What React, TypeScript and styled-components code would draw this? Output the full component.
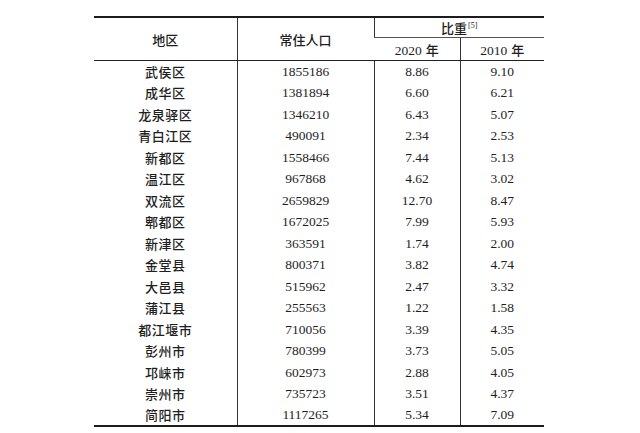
import React from "react";
import styled, { createGlobalStyle } from "styled-components";

const Global = createGlobalStyle`
  html, body { margin: 0; padding: 0; background: #ffffff; }
  body { width: 640px; height: 433px; overflow: hidden; }
`;

const Page = styled.div`
  padding: 16px 0 0 94px;
`;

const Table = styled.table`
  width: 450px;
  table-layout: fixed;
  border-collapse: collapse;
  border-top: 2px solid #1c1c1c;
  border-bottom: 2px solid #1c1c1c;
  color: #1e1e1e;
`;

const HeadCell = styled.th<{ $divider?: boolean; $sub?: boolean }>`
  padding: 0;
  font-family: "Noto Sans CJK SC", "Noto Sans", sans-serif;
  font-weight: 500;
  font-size: 13px;
  text-align: center;
  vertical-align: middle;
  border-left: ${(p) => (p.$divider ? "1px solid #333" : "none")};
  border-bottom: ${(p) => (p.$sub ? "1px solid #555" : "1.5px solid #222")};
  &:first-child { border-left: none; }
`;

const Year = styled.span`
  font-family: "Liberation Serif", serif;
  font-size: 13.5px;
  font-weight: 400;
  & > b {
    font-family: "Noto Sans CJK SC", sans-serif;
    font-weight: 500;
    font-size: 13px;
    margin-left: 4px;
  }
`;

const Sup = styled.sup`
  font-family: "Liberation Serif", serif;
  font-weight: 400;
  font-size: 8px;
  vertical-align: 5px;
  margin-left: 1px;
`;

const HeadRowTop = styled.tr`
  height: 20px;
`;

const HeadRowSub = styled.tr`
  height: 23px;
`;

const BodyRow = styled.tr`
  height: 21.5px;
`;

const Cell = styled.td<{ $name?: boolean }>`
  padding: 0;
  text-align: center;
  vertical-align: middle;
  border-left: ${(p) => (p.$name ? "none" : "1px solid #333")};
  font-family: ${(p) =>
    p.$name ? `"Noto Sans CJK SC", "Noto Sans", sans-serif` : `"Liberation Serif", serif`};
  font-weight: ${(p) => (p.$name ? 500 : 400)};
  font-size: ${(p) => (p.$name ? "13px" : "13.5px")};
  letter-spacing: ${(p) => (p.$name ? "0.5px" : "0")};
  line-height: 1;
`;

const rows: [string, string, string, string][] = [
  ["武侯区", "1855186", "8.86", "9.10"],
  ["成华区", "1381894", "6.60", "6.21"],
  ["龙泉驿区", "1346210", "6.43", "5.07"],
  ["青白江区", "490091", "2.34", "2.53"],
  ["新都区", "1558466", "7.44", "5.13"],
  ["温江区", "967868", "4.62", "3.02"],
  ["双流区", "2659829", "12.70", "8.47"],
  ["郫都区", "1672025", "7.99", "5.93"],
  ["新津区", "363591", "1.74", "2.00"],
  ["金堂县", "800371", "3.82", "4.74"],
  ["大邑县", "515962", "2.47", "3.32"],
  ["蒲江县", "255563", "1.22", "1.58"],
  ["都江堰市", "710056", "3.39", "4.35"],
  ["彭州市", "780399", "3.73", "5.05"],
  ["邛崃市", "602973", "2.88", "4.05"],
  ["崇州市", "735723", "3.51", "4.37"],
  ["简阳市", "1117265", "5.34", "7.09"],
];

export default function App() {
  return (
    <>
      <Global />
      <Page>
        <Table>
          <colgroup>
            <col style={{ width: 143 }} />
            <col style={{ width: 137 }} />
            <col style={{ width: 86 }} />
            <col style={{ width: 84 }} />
          </colgroup>
          <thead>
            <HeadRowTop>
              <HeadCell rowSpan={2}>地区</HeadCell>
              <HeadCell rowSpan={2} $divider>
                常住人口
              </HeadCell>
              <HeadCell colSpan={2} $divider $sub>
                比重<Sup>[5]</Sup>
              </HeadCell>
            </HeadRowTop>
            <HeadRowSub>
              <HeadCell $divider>
                <Year>
                  2020<b>年</b>
                </Year>
              </HeadCell>
              <HeadCell $divider>
                <Year>
                  2010<b>年</b>
                </Year>
              </HeadCell>
            </HeadRowSub>
          </thead>
          <tbody>
            {rows.map((r) => (
              <BodyRow key={r[0]}>
                <Cell $name>{r[0]}</Cell>
                <Cell>{r[1]}</Cell>
                <Cell>{r[2]}</Cell>
                <Cell>{r[3]}</Cell>
              </BodyRow>
            ))}
          </tbody>
        </Table>
      </Page>
    </>
  );
}
